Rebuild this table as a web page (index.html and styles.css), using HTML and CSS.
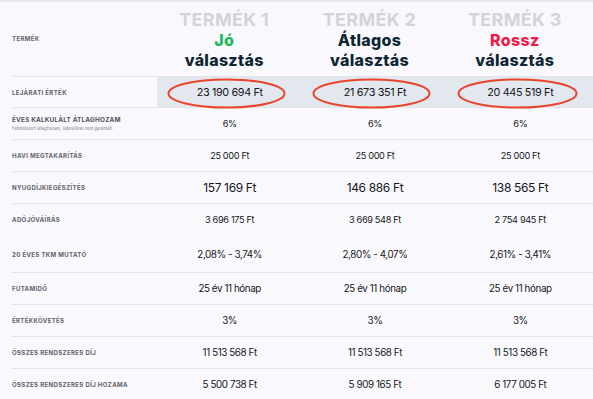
FILE: index.html
```html
<!DOCTYPE html>
<html lang="hu">
<head>
<meta charset="utf-8">
<link rel="stylesheet" href="styles.css">
</head>
<body>
<div class="topshade"></div>
<div class="table">
  <div class="row head">
    <div class="label">TERMÉK</div>
    <div class="hcell"><div class="pname">TERMÉK 1</div><div class="verdict"><span class="good">Jó</span><br>választás</div></div>
    <div class="hcell"><div class="pname">TERMÉK 2</div><div class="verdict">Átlagos<br>választás</div></div>
    <div class="hcell"><div class="pname">TERMÉK 3</div><div class="verdict"><span class="bad">Rossz</span><br>választás</div></div>
  </div>
  <div class="row hl">
    <div class="label">LEJÁRATI ÉRTÉK</div>
    <div class="val big1"><svg class="ring" viewBox="0 0 120 32" preserveAspectRatio="none"><ellipse cx="60" cy="16" rx="58.5" ry="14.5"/></svg><span>23 190 694 Ft</span></div>
    <div class="val big1"><svg class="ring" viewBox="0 0 120 32" preserveAspectRatio="none"><ellipse cx="60" cy="16" rx="58.5" ry="14.5"/></svg><span>21 673 351 Ft</span></div>
    <div class="val big1"><svg class="ring r3" viewBox="0 0 120 32" preserveAspectRatio="none"><ellipse cx="60" cy="16" rx="58.5" ry="14.5"/></svg><span>20 445 519 Ft</span></div>
  </div>
  <div class="row">
    <div class="label lg">ÉVES KALKULÁLT ÁTLAGHOZAM<div class="sub">Feltételezett átlaghozam, teljesülése nem garantált.</div></div>
    <div class="val sm">6%</div><div class="val sm">6%</div><div class="val sm">6%</div>
  </div>
  <div class="row">
    <div class="label">HAVI MEGTAKARÍTÁS</div>
    <div class="val sm">25 000 Ft</div><div class="val sm">25 000 Ft</div><div class="val sm">25 000 Ft</div>
  </div>
  <div class="row">
    <div class="label">NYUGDÍJKIEGÉSZÍTÉS</div>
    <div class="val lgv">157 169 Ft</div><div class="val lgv">146 886 Ft</div><div class="val lgv">138 565 Ft</div>
  </div>
  <div class="row nob">
    <div class="label">ADÓJÓVÁÍRÁS</div>
    <div class="val sm">3 696 175 Ft</div><div class="val sm">3 669 548 Ft</div><div class="val sm">2 754 945 Ft</div>
  </div>
  <div class="row tall">
    <div class="label">20 ÉVES TKM MUTATÓ</div>
    <div class="val">2,08% - 3,74%</div><div class="val">2,80% - 4,07%</div><div class="val">2,61% - 3,41%</div>
  </div>
  <div class="row">
    <div class="label">FUTAMIDŐ</div>
    <div class="val">25 év 11 hónap</div><div class="val">25 év 11 hónap</div><div class="val">25 év 11 hónap</div>
  </div>
  <div class="row">
    <div class="label">ÉRTÉKKÖVETÉS</div>
    <div class="val">3%</div><div class="val">3%</div><div class="val">3%</div>
  </div>
  <div class="row">
    <div class="label">ÖSSZES RENDSZERES DÍJ</div>
    <div class="val">11 513 568 Ft</div><div class="val">11 513 568 Ft</div><div class="val">11 513 568 Ft</div>
  </div>
  <div class="row nob">
    <div class="label">ÖSSZES RENDSZERES DÍJ HOZAMA</div>
    <div class="val">5 500 738 Ft</div><div class="val">5 909 165 Ft</div><div class="val">6 177 005 Ft</div>
  </div>
</div>
</body>
</html>
```

FILE: styles.css
```css
html, body {
  margin: 0;
  padding: 0;
  background: #f9f9fd;
  font-family: Inter, "Noto Sans", sans-serif;
  color: #16181d;
  overflow: hidden;
}
.topshade {
  height: 3px;
  background: linear-gradient(#e2e2e8, #f9f9fd);
}
.table {
  margin-left: 12px;
  margin-top: -3px;
}
.row {
  display: grid;
  grid-template-columns: 145px repeat(3, 1fr);
  height: 31px;
  border-bottom: 1px solid #e4e4ea;
  align-items: center;
}
.row.head {
  height: 76px;
}
.row.nob { border-bottom: none; }
.row.tall {
  height: 38px;
  padding-top: 2px;
  box-sizing: border-box;
}
.row.hl {
  height: 30px;
}
.row.hl .val {
  background: #e3e7ee;
  height: 100%;
}
.label {
  font-size: 6.1px;
  font-weight: 700;
  letter-spacing: 0.33px;
  color: #5f636b;
}
.label.lg {
  font-size: 6.4px;
  letter-spacing: 0.2px;
  color: #4f5259;
}
.sub {
  font-size: 4.2px;
  font-weight: 400;
  letter-spacing: 0;
  color: #7a7d85;
  margin-top: 2px;
}
.hcell {
  align-self: start;
  text-align: center;
  padding-right: 11px;
  font-weight: 700;
  padding-top: 11px;
}
.pname {
  font-size: 18px;
  line-height: 18px;
  color: #d4d4d8;
  letter-spacing: 0.3px;
}
.verdict {
  margin-top: 2px;
  font-size: 16px;
  line-height: 19.5px;
  font-weight: 800;
  color: #0f2633;
  letter-spacing: 0.3px;
}
.good { color: #1fb85a; }
.bad { color: #ef1c4a; }
.val {
  position: relative;
  display: flex;
  align-items: center;
  justify-content: center;
  font-size: 9.8px;
  letter-spacing: -0.4px;
  color: #15171b;
  height: 100%;
}
.val.sm {
  font-size: 9.2px;
  letter-spacing: -0.35px;
}
.val.lgv {
  font-size: 12px;
  letter-spacing: -0.35px;
}
.val.big1 {
  font-size: 10.8px;
  letter-spacing: -0.35px;
}
.val span {
  position: relative;
}
.ring {
  position: absolute;
  left: 10px;
  top: 1px;
  width: 119px;
  height: 31px;
  overflow: visible;
}
.ring.r3 {
  left: 9px;
  width: 121px;
}
.ring ellipse {
  fill: none;
  stroke: #e8452c;
  stroke-width: 2;
  vector-effect: non-scaling-stroke;
}
```
